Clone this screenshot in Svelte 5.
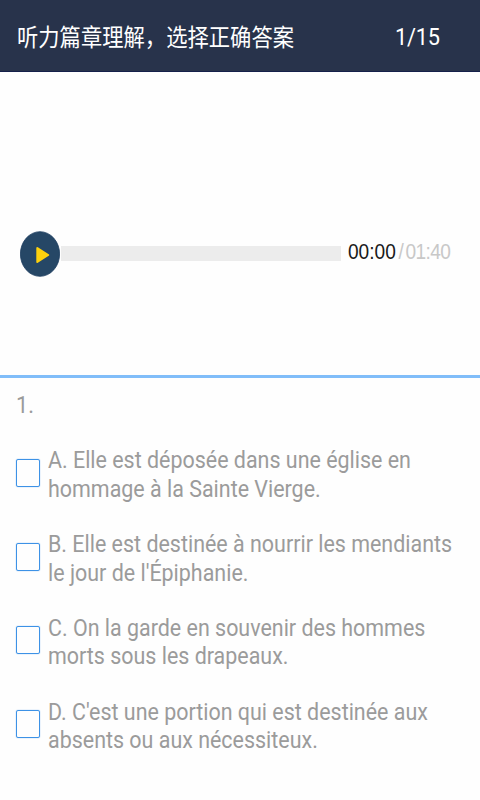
<script lang="ts">
	const title = '听力篇章理解，选择正确答案';
	const current = 1;
	const total = 15;

	let playing = $state(false);

	let options = $state([
		{ key: 'A', lines: ['Elle est déposée dans une église en', 'hommage à la Sainte Vierge.'], checked: false },
		{ key: 'B', lines: ['Elle est destinée à nourrir les mendiants', "le jour de l'Épiphanie."], checked: false },
		{ key: 'C', lines: ['On la garde en souvenir des hommes', 'morts sous les drapeaux.'], checked: false },
		{ key: 'D', lines: ["C'est une portion qui est destinée aux", 'absents ou aux nécessiteux.'], checked: false }
	]);
</script>

<div class="page">
	<header class="header">
		<h1 class="title narrow">{title}</h1>
		<span class="counter narrow">{current}/{total}</span>
	</header>

	<section class="player">
		<button class="play" aria-label="播放" onclick={() => (playing = !playing)}>
			<svg width="40" height="46" viewBox="0 0 40 46">
				<ellipse cx="20" cy="23" rx="19.6" ry="22.3" fill="#264766" stroke="#1c3c60" stroke-width="0.8" />
				<path
					d="M17.3 17 L28.2 24 L17.3 31 Z"
					fill="#fdd10e"
					stroke="#fdd10e"
					stroke-width="2"
					stroke-linejoin="round"
				/>
			</svg>
		</button>
		<div class="track"></div>
		<div class="time narrow">
			<span class="elapsed">00:00</span><span class="slash">/</span><span class="duration">01:40</span>
		</div>
	</section>

	<section class="question">
		<p class="number narrow">1.</p>
		<div class="options">
			{#each options as option (option.key)}
				<button class="option" onclick={() => (option.checked = !option.checked)}>
					<span class="box" class:checked={option.checked}></span>
					<span class="label narrow">
						{option.key}. {option.lines[0]}<br />{option.lines[1]}
					</span>
				</button>
			{/each}
		</div>
	</section>
</div>

<style>
	:global(body) {
		background: #fefefe;
	}

	.page {
		width: 480px;
		height: 800px;
		overflow: hidden;
		font-family: Roboto, 'Noto Sans CJK SC', sans-serif;
		background: #fefefe;
	}

	/* condensed lettering */
	.narrow {
		transform: scaleX(0.888);
		transform-origin: left center;
		white-space: nowrap;
	}

	.header {
		box-sizing: border-box;
		display: flex;
		align-items: center;
		height: 72px;
		padding: 3px 0 0 16.5px;
		color: #fff;
		background: #28334b;
		border-bottom: 1px solid #15204a;
	}

	.title {
		width: 378px;
		margin: 0 0 3px;
		font-size: 24px;
		font-weight: 400;
	}

	.counter {
		margin-bottom: 1px;
		font-size: 24.5px;
		letter-spacing: -0.3px;
	}

	.player {
		box-sizing: border-box;
		display: flex;
		align-items: center;
		height: 303px;
		padding: 60px 0 0 20px;
	}

	.play {
		display: flex;
		padding: 0;
		border: none;
		background: none;
		cursor: pointer;
	}

	.track {
		width: 280px;
		height: 15px;
		margin: 0 6.5px 0 1px;
		background: #ececec;
	}

	.time {
		display: flex;
		margin-top: -2px;
		font-family: 'Liberation Sans', sans-serif;
		font-size: 21.5px;
		color: #c8c8c8;
	}

	.elapsed {
		color: #1a1a1a;
	}

	.slash {
		margin: 0 2px 0 3px;
	}

	.duration {
		letter-spacing: -0.7px;
	}

	.question {
		border-top: 3px solid #80bdf9;
		padding: 13.4px 0 0 16px;
		font-size: 24.5px;
		line-height: 28.6px;
		color: #9b9b9b;
	}

	.number {
		margin: 0 0 26.5px;
	}

	.options {
		display: flex;
		flex-direction: column;
		gap: 26.5px;
	}

	.option {
		display: flex;
		align-items: center;
		gap: 8px;
		padding: 0;
		border: none;
		background: none;
		font: inherit;
		color: inherit;
		text-align: left;
		cursor: pointer;
	}

	.label {
		transform: scaleX(0.875);
	}

	.box {
		box-sizing: border-box;
		flex: none;
		width: 24px;
		height: 28px;
		margin-bottom: 4px;
		border: 1.5px solid #3d92e6;
		border-radius: 2px;
		box-shadow: 0 0 1px #3d92e6;
	}

	.box.checked {
		background: #3d92e6;
	}
</style>
